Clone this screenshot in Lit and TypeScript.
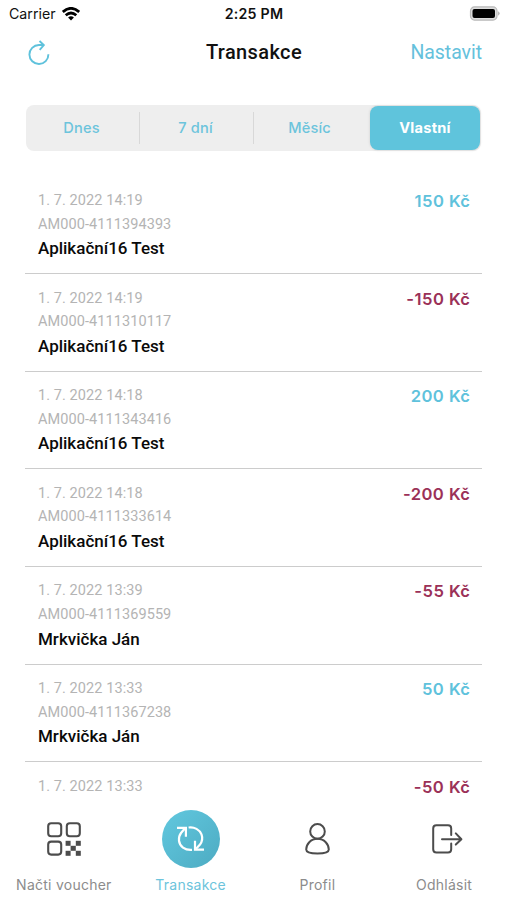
import { LitElement, html, css, svg } from "lit";
import { customElement, state } from "lit/decorators.js";
import { classMap } from "lit/directives/class-map.js";

interface Transaction {
  date: string;
  code: string;
  name: string;
  amount: number;
}

const TRANSACTIONS: Transaction[] = [
  { date: "1. 7. 2022 14:19", code: "AM000-4111394393", name: "Aplikační16 Test", amount: 150 },
  { date: "1. 7. 2022 14:19", code: "AM000-4111310117", name: "Aplikační16 Test", amount: -150 },
  { date: "1. 7. 2022 14:18", code: "AM000-4111343416", name: "Aplikační16 Test", amount: 200 },
  { date: "1. 7. 2022 14:18", code: "AM000-4111333614", name: "Aplikační16 Test", amount: -200 },
  { date: "1. 7. 2022 13:39", code: "AM000-4111369559", name: "Mrkvička Ján", amount: -55 },
  { date: "1. 7. 2022 13:33", code: "AM000-4111367238", name: "Mrkvička Ján", amount: 50 },
  { date: "1. 7. 2022 13:33", code: "", name: "", amount: -50 },
];

const RANGES = ["Dnes", "7 dní", "Měsíc", "Vlastní"];

const qrIcon = svg`
  <g fill="none" stroke="#4c4c4c" stroke-width="2.1">
    <rect x="1.2" y="1.2" width="13" height="13" rx="3"/>
    <rect x="19.8" y="1.2" width="13" height="13" rx="3"/>
    <rect x="1.2" y="19.6" width="13" height="13" rx="3"/>
  </g>
  <g fill="#4c4c4c">
    <rect x="18.6" y="18.8" width="5" height="5"/><rect x="28.8" y="18.8" width="5" height="5"/>
    <rect x="23.6" y="23.8" width="5.2" height="5"/>
    <rect x="18.6" y="28.8" width="5" height="5"/><rect x="28.8" y="28.8" width="5" height="5"/>
  </g>`;

const syncIcon = svg`
  <g fill="none" stroke="#fff" stroke-width="2.2">
    <path d="M9.5 2.8L5 8C1.6 12.6 2.4 19.2 7 22.6Q10.6 25.3 16 24.9"/>
    <path d="M1 2.8H9.9V11.8"/>
    <path d="M12.6 2.5C18.4 1.7 23.6 4.6 25.5 9.4C26.8 13 26.2 16.6 24 19.6L19.4 24.5"/>
    <path d="M28 24.7H19V15.8"/>
  </g>`;

const personIcon = svg`
  <g fill="none" stroke="#4c4c4c" stroke-width="2">
    <circle cx="12.5" cy="8.4" r="7.3"/>
    <path d="M12.5 15.8C5.6 15.8 1.2 21.3 1.2 26.6C1.2 29.3 5 30.6 12.5 30.6S23.8 29.3 23.8 26.6C23.8 21.3 19.4 15.8 12.5 15.8Z"/>
  </g>`;

const logoutIcon = svg`
  <g fill="none" stroke="#4c4c4c" stroke-width="2" stroke-linecap="round" stroke-linejoin="round">
    <path d="M19.2 11V4.4Q19.2 1.2 16 1.2H4.4Q1.2 1.2 1.2 4.4V25.2Q1.2 28.4 4.4 28.4H16Q19.2 28.4 19.2 25.2V19.4"/>
    <path d="M10 15.3H29.2M23.8 9.4L29.4 15.3L23.8 20.6"/>
  </g>`;

@customElement("app-root")
export class AppRoot extends LitElement {
  @state() private range = "Vlastní";

  static styles = css`
    :host {
      display: flex;
      flex-direction: column;
      width: 507px;
      height: 900px;
      overflow: hidden;
      background: #fff;
      color: #111;
      font-family: Roboto, "Noto Sans", sans-serif;
      white-space: nowrap;
    }
    svg { display: block; flex: none; }
    .status, .title-bar {
      display: grid;
      grid-template-columns: 1fr auto 1fr;
      align-items: center;
      box-sizing: border-box;
    }
    .status {
      height: 28px;
      padding: 0 7px 0 9px;
      font: 400 14.2px/28px Inter, sans-serif;
    }
    .carrier { display: flex; align-items: center; gap: 6px; }
    .carrier svg { margin-top: -1px; }
    .clock { font-weight: 600; letter-spacing: 0.25px; margin-left: -1px; }
    .battery { justify-self: end; margin-top: -2px; }
    .title-bar { height: 48px; padding: 0 25px 0 28px; }
    .title { font-size: 20px; font-weight: 500; letter-spacing: 0.38px; margin-left: -2px; }
    .setup { justify-self: end; font-size: 19.5px; color: #65c1dc; letter-spacing: -0.05px; }
    .refresh { margin-top: 2px; }
    .ranges {
      display: flex;
      flex: none;
      height: 46px;
      margin: 29px 26px 0;
      border-radius: 8px;
      background: #eee;
      font: 500 14.6px/47px Inter, sans-serif;
      color: #6cc4dc;
    }
    .range {
      position: relative;
      box-sizing: border-box;
      flex: 1;
      padding-right: 3px;
      text-align: center;
      letter-spacing: 0.15px;
    }
    .divided::after {
      content: "";
      position: absolute;
      right: 0;
      top: 7px;
      width: 1px;
      height: 32px;
      background: #d8d8d8;
    }
    .chosen {
      flex: 0 0 110px;
      height: 44px;
      margin: 1px 1px 0 2px;
      padding-right: 0;
      border-radius: 8px;
      background: #5fc4dc;
      box-shadow: 0 0 3px #0002;
      color: #fff;
      font-weight: 700;
      line-height: 45px;
      letter-spacing: 0.25px;
    }
    .list { flex: 1; min-height: 0; overflow: hidden; margin: 25.6px 25px 0; }
    .row {
      display: flex;
      justify-content: space-between;
      box-sizing: border-box;
      height: 97.6px;
      padding: 12.5px 11.5px 0 13px;
      border-bottom: 1.5px solid #ccc;
    }
    .meta { font-size: 14.5px; line-height: 23.6px; color: #b4b4b4; letter-spacing: 0.08px; }
    .name { font-size: 17px; line-height: 25px; font-weight: 500; color: #0a0a0a; }
    .amount { font: 600 16.6px/25px Inter, sans-serif; color: #5fc2dc; letter-spacing: 0.45px; }
    .negative { color: #9b3158; }
    .tabs { display: grid; grid-template-columns: repeat(4, 1fr); flex: none; height: 97px; }
    .tab {
      display: flex;
      flex-direction: column;
      align-items: center;
      font: 400 14px/18px Inter, sans-serif;
      color: #8c8c8c;
      letter-spacing: 0.25px;
    }
    .glyph {
      display: flex;
      align-items: center;
      justify-content: center;
      width: 58px;
      height: 58px;
      margin: 7px 0 8px;
      padding-left: 2px;
      border-radius: 50%;
    }
    .label { padding-left: 1px; }
    .tab:last-child .glyph { padding-left: 7px; }
    .current { color: #6cc4dc; }
    .current .glyph { padding: 0; margin-left: 1px; background: linear-gradient(135deg, #61c8df, #4dabc2); }
  `;

  private renderRow(t: Transaction) {
    return html`
      <div class="row">
        <div>
          <div class="meta">${t.date}</div>
          <div class="meta">${t.code}</div>
          <div class="name">${t.name}</div>
        </div>
        <div class=${classMap({ amount: true, negative: t.amount < 0 })}>${t.amount} Kč</div>
      </div>`;
  }

  private renderTab(label: string, icon: unknown, w: number, h: number, current = false) {
    return html`
      <div class=${classMap({ tab: true, current })}>
        <div class="glyph"><svg width=${w} height=${h} viewBox="0 0 ${w} ${h}">${icon}</svg></div>
        <span class="label">${label}</span>
      </div>`;
  }

  render() {
    return html`
      <div class="status">
        <div class="carrier">
          <span>Carrier</span>
          <svg width="18" height="14" viewBox="0 0 18 14">
            <g fill="none" stroke="#000" stroke-width="2.8">
              <path d="M.8 4.9Q9 -2.2 17.2 4.9"/><path d="M3.7 8.3Q9 3.8 14.3 8.3"/>
            </g>
            <path d="M6.1 10.4Q9 8 11.9 10.4L9 13.5Z"/>
          </svg>
        </div>
        <span class="clock">2:25 PM</span>
        <svg class="battery" width="31" height="15" viewBox="0 0 31 15">
          <rect x="1.5" y=".9" width="26.5" height="13.2" rx="4" fill="#ddd" stroke="#b8b8b8" stroke-width="1.2"/>
          <rect x="3.5" y="2.9" width="22.5" height="9.2" rx="2"/>
          <path d="M29.2 5.3Q32 7.5 29.2 9.7Z" fill="#aaa"/>
        </svg>
      </div>
      <div class="title-bar">
        <svg class="refresh" width="22" height="26" viewBox="0 0 22 26" fill="none" stroke="#5fc2dc" stroke-width="1.9">
          <path d="M20.4 14.3A9.5 9.5 0 1 1 10.9 5H15.5M11.5 1L15.8 5.1L11.7 9.8"/>
        </svg>
        <span class="title">Transakce</span>
        <span class="setup">Nastavit</span>
      </div>
      <div class="ranges">
        ${RANGES.map((r, i) => html`
          <div class=${classMap({ range: true, divided: i < 2, chosen: r === this.range })}
            @click=${() => (this.range = r)}>${r}</div>`)}
      </div>
      <div class="list">${TRANSACTIONS.map((t) => this.renderRow(t))}</div>
      <div class="tabs">
        ${this.renderTab("Načti voucher", qrIcon, 34, 34)}
        ${this.renderTab("Transakce", syncIcon, 29, 28, true)}
        ${this.renderTab("Profil", personIcon, 25, 32)}
        ${this.renderTab("Odhlásit", logoutIcon, 31, 30)}
      </div>`;
  }
}
